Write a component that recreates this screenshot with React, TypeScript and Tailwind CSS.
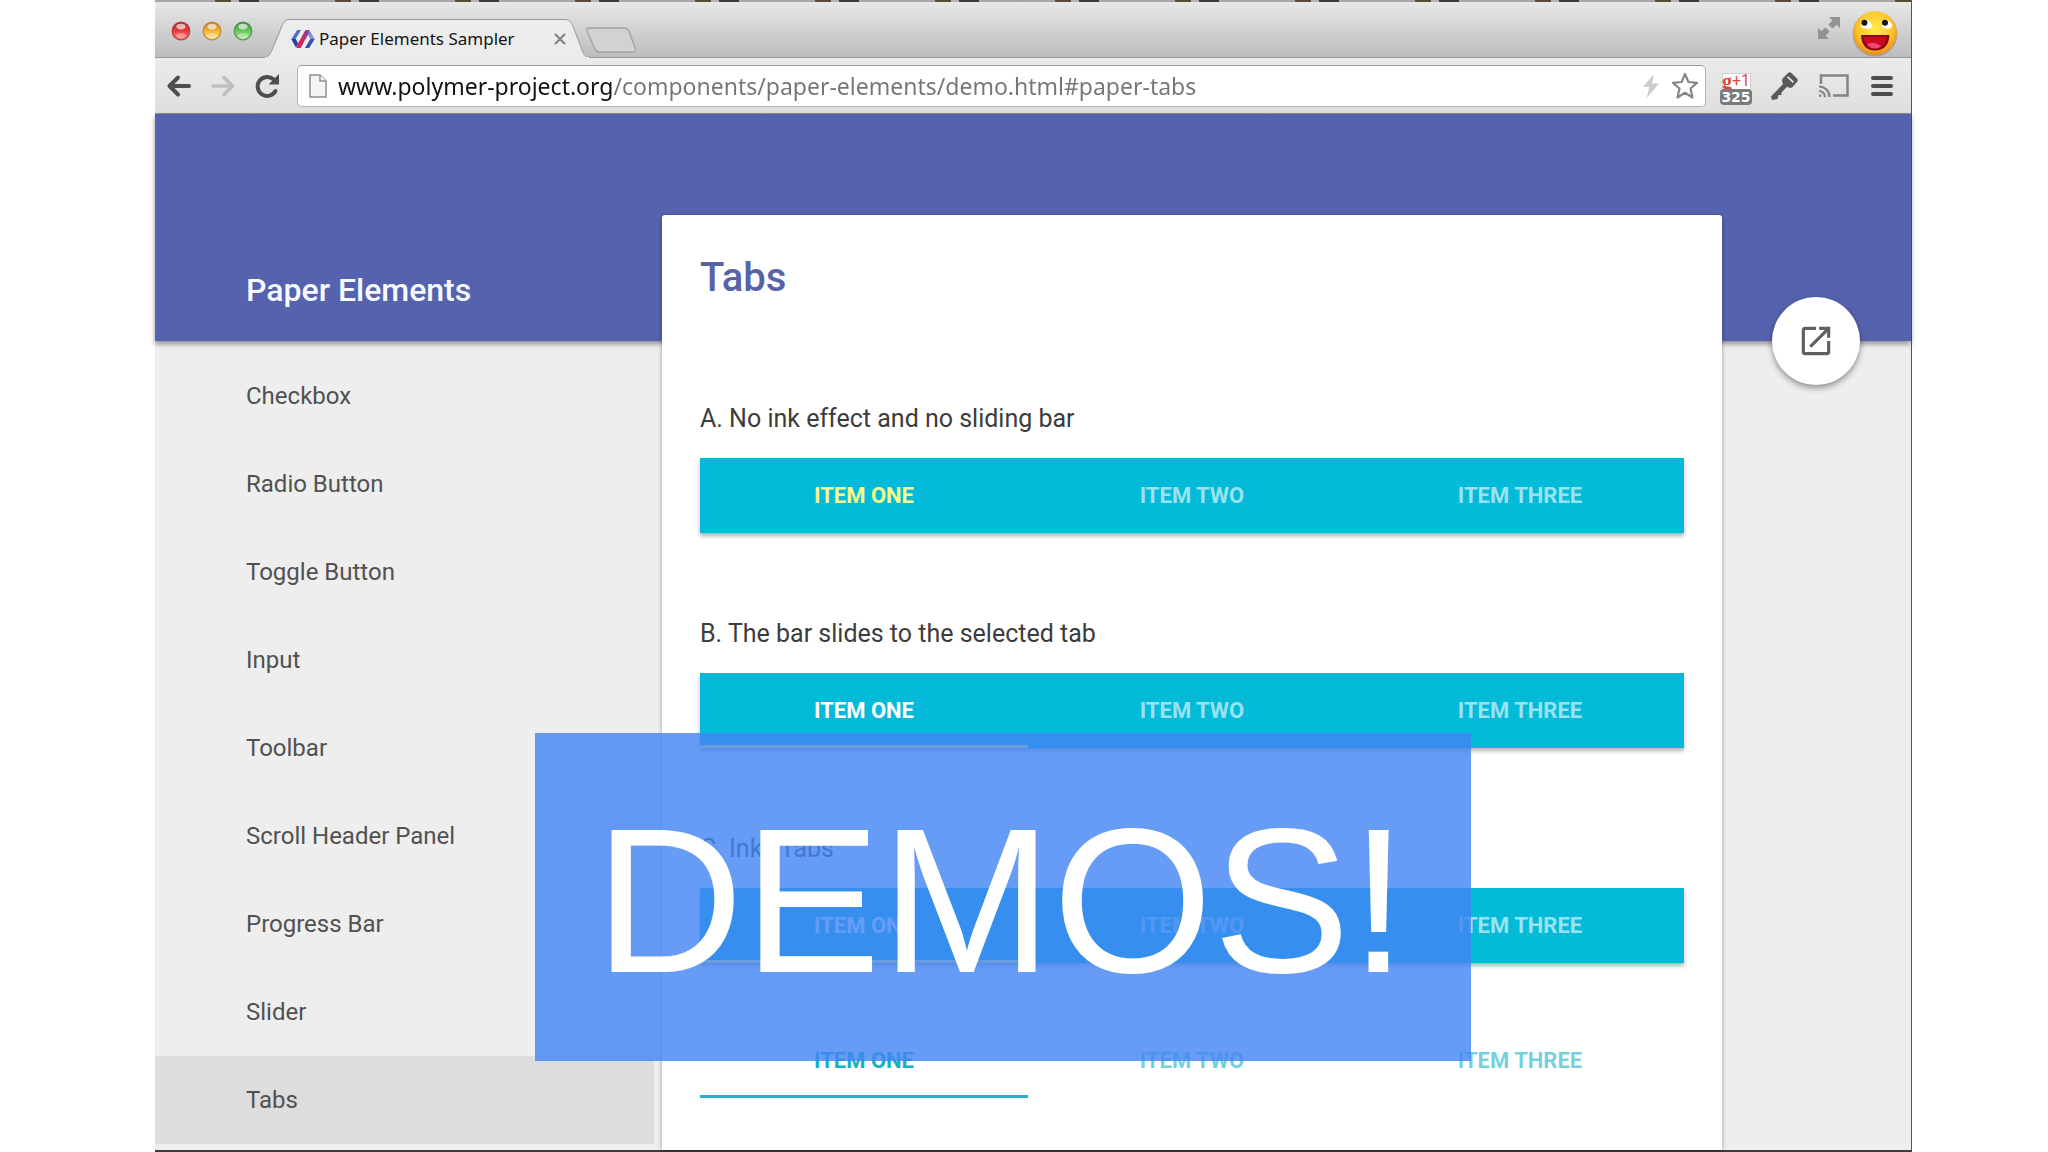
import React, { useState } from "react";

const NAV_ITEMS = [
  "Checkbox",
  "Radio Button",
  "Toggle Button",
  "Input",
  "Toolbar",
  "Scroll Header Panel",
  "Progress Bar",
  "Slider",
  "Tabs",
];

const TAB_ITEMS = ["ITEM ONE", "ITEM TWO", "ITEM THREE"];

type TabBarProps = {
  label: string;
  barClass: string;
  activeClass: string;
  idleClass: string;
  underlineClass?: string;
};

function TabBar({ label, barClass, activeClass, idleClass, underlineClass }: TabBarProps) {
  const [selected, setSelected] = useState(0);
  return (
    <div role="tablist" aria-label={label} className={`grid h-[75px] grid-cols-3 ${barClass}`}>
      {TAB_ITEMS.map((item, i) => (
        <button
          key={item}
          type="button"
          role="tab"
          aria-selected={i === selected}
          onClick={() => setSelected(i)}
          className={`relative text-[22px] font-bold ${i === selected ? activeClass : idleClass}`}
        >
          {item}
          {underlineClass && i === selected && (
            <span className={`absolute inset-x-0 bottom-0 h-[3px] ${underlineClass}`} />
          )}
        </button>
      ))}
    </div>
  );
}

function TrafficLight({ id, dark, mid, light, label }: { id: string; dark: string; mid: string; light: string; label: string }) {
  return (
    <button type="button" aria-label={label} className="size-5">
      <svg viewBox="0 0 20 20" className="size-5">
        <defs>
          <linearGradient id={id} x1="0" y1="0" x2="0" y2="1">
            <stop offset="0" stopColor={dark} />
            <stop offset="0.5" stopColor={mid} />
            <stop offset="1" stopColor={light} />
          </linearGradient>
        </defs>
        <circle cx="10" cy="10" r="8.8" fill={`url(#${id})`} stroke={dark} strokeOpacity="0.8" strokeWidth="1.2" />
        <ellipse cx="10" cy="5.6" rx="4.6" ry="2.8" fill="#fff" fillOpacity="0.65" />
        <ellipse cx="10" cy="14.6" rx="5" ry="2.6" fill="#fff" fillOpacity="0.3" />
      </svg>
    </button>
  );
}

function PolymerLogo() {
  return (
    <svg viewBox="0 0 24 20" className="h-5 w-6 shrink-0">
      <path d="M6.2 1 L10 1 L4.6 10 L7 14.4 L5 18.4 L0.4 10 Z" fill="#4d6fd0" />
      <path d="M0.4 10 L4.6 10 L7 14.4 L5 18.4 Z" fill="#2b3f9e" />
      <path d="M14.6 1 L18.4 1 L23.6 10 L18 19 L14 19 L19.4 10 L17 5.4 Z" fill="#7d90dc" />
      <path d="M19.4 10 L23.6 10 L18 19 L14 19 Z" fill="#3a4fae" />
      <path d="M14.6 1 L18 1 L17 5.4 L9.6 19 L5.4 19 L7 14.6 Z" fill="#d6245c" />
      <path d="M14.6 1 L18 1 L17 5.4 L14 10.8 L10.8 8 Z" fill="#9a3b93" />
    </svg>
  );
}

function SmileyIcon() {
  return (
    <svg viewBox="0 0 48 48" className="size-12">
      <defs>
        <radialGradient id="face" cx="0.5" cy="0.4" r="0.6">
          <stop offset="0" stopColor="#ffe94a" />
          <stop offset="0.65" stopColor="#fdc82c" />
          <stop offset="1" stopColor="#ee8a14" />
        </radialGradient>
      </defs>
      <circle cx="24" cy="25" r="22.6" fill="#000" fillOpacity="0.15" />
      <circle cx="24" cy="24" r="21.8" fill="url(#face)" />
      <path d="M10 18 C9 12 14 9 18 12 C21 14 22 17 20.6 19 C17 20 13 20 10 18Z" fill="#fff" />
      <path d="M31 18 C30 12 34 9 38 12 C41 14 42 17 40 19 C37 20 33 20 31 18Z" fill="#fff" />
      <circle cx="13.4" cy="13.8" r="3" fill="#16110a" />
      <circle cx="34" cy="13.8" r="3" fill="#16110a" />
      <path d="M10 26 L38.500 26 C38 36 33 41.500 24 41.500 C15 41.500 10.500 36 10 26Z" fill="#8e0612" />
      <path d="M12.500 28 L36 28 C35 34 31 39.500 24 39.500 C17 39.500 13 34 12.500 28Z" fill="#c90a22" />
      <path d="M16 36 C20 32 26 34 30 37.500 C26 40 20 40.500 16 36Z" fill="#f0476a" />
    </svg>
  );
}

function TitleBar() {
  return (
    <div className="flex h-14 border-b border-[#989898] bg-gradient-to-b from-[#e8e8e8] to-[#bdbcbe]">
      <div className="flex items-center gap-[11px] pt-0.5 pr-3.5 pl-4">
        <TrafficLight id="light-close" label="Close window" dark="#b3262a" mid="#ee3a3c" light="#ff8f88" />
        <TrafficLight id="light-min" label="Minimize window" dark="#b87a22" mid="#f5b536" light="#ffe487" />
        <TrafficLight id="light-zoom" label="Zoom window" dark="#3d8a3c" mid="#66c75e" light="#b4f09c" />
      </div>
      <div className="relative mt-[17px] -mb-px -ml-1 flex w-[328px] items-center pl-7">
        <svg viewBox="0 0 328 39" preserveAspectRatio="none" className="absolute inset-0 size-full">
          <path
            d="M0 38.500 C6 38.500 7 35 9 31 L19 7 C21 3 22 0.500 27 0.500 L302 0.500 C307 0.500 308 3 310 7 L319 31 C321 36 322 38.500 328 38.500"
            fill="#ececec"
            stroke="#989898"
          />
          <path d="M2 39 L326 39" stroke="#ececec" strokeWidth="2" />
        </svg>
        <button type="button" className="relative flex items-center gap-1 font-['Noto_Sans',sans-serif] text-[17px] whitespace-nowrap text-[#141414]">
          <PolymerLogo />
          Paper Elements Sampler
        </button>
        <button type="button" aria-label="Close tab" className="relative ml-[37px] size-4">
          <svg viewBox="0 0 16 16" className="size-4">
            <path d="M3 3 L13 13 M13 3 L3 13" stroke="#868686" strokeWidth="2.200" />
          </svg>
        </button>
      </div>
      <button type="button" aria-label="New tab" className="-ml-1.5 mt-[25px] h-[26px] w-[52px]">
        <svg viewBox="0 0 52 26" className="h-[26px] w-[52px]">
          <path
            d="M4 1 L39 1 C42 1 43 2 44 4 L50 21 C51 24 50 25 47 25 L16 25 C12 25 11 24 9.500 21 L2 4 C1 2 2 1 4 1Z"
            fill="#d2d2d2"
            stroke="#a3a3a3"
            strokeWidth="1.300"
          />
        </svg>
      </button>
      <div className="ml-auto flex items-center gap-2.5 pr-3">
        <button type="button" aria-label="Enter full screen" className="mb-1 size-6">
          <svg viewBox="0 0 24 24" className="size-6" fill="#929292">
            <path d="M12 1 L23 1 L23 12 L19.500 8.700 L15.600 12.600 L11.400 8.500 L15.400 4.500Z" />
            <path d="M1 12 L4.500 15.300 L8.400 11.400 L12.600 15.500 L8.600 19.500 L12 23 L1 23Z" />
          </svg>
        </button>
        <button type="button" aria-label="Profile" className="mt-1.5 size-12">
          <SmileyIcon />
        </button>
      </div>
    </div>
  );
}

function AddressBar() {
  const [url, setUrl] = useState("www.polymer-project.org/components/paper-elements/demo.html#paper-tabs");
  return (
    <div className="flex h-[42px] min-w-0 flex-1 items-center rounded-[5px] border border-[#b4b3b4] border-t-[#9c9c9c] bg-white pr-1.5 pl-[11px]">
      <svg viewBox="0 0 18 24" className="h-6 w-[18px] shrink-0">
        <path d="M1 1 L11 1 L17 7 L17 23 L1 23Z" fill="#f5f5f5" stroke="#8f8f8f" strokeWidth="1.500" />
        <path d="M11 1 L11 7 L17 7" fill="#fff" stroke="#8f8f8f" strokeWidth="1.500" />
      </svg>
      <input
        type="text"
        aria-label="Address"
        spellCheck={false}
        value={url}
        onChange={(e) => setUrl(e.target.value)}
        className="ml-[11px] h-10 min-w-0 flex-1 bg-[linear-gradient(to_right,#111_275px,#757575_275px)] bg-clip-text font-['Noto_Sans',sans-serif] text-[23px] text-transparent caret-black outline-none"
      />
      <svg viewBox="0 0 16 24" className="h-6 w-4 shrink-0">
        <path d="M11 0 L0 13 L6.500 13 L3.500 24 L16 9.500 L9 9.500Z" fill="#cbcbcb" />
      </svg>
      <button type="button" aria-label="Bookmark this page" className="ml-3 size-7">
        <svg viewBox="0 0 28 28" className="size-7">
          <path
            d="M14 2 L17.400 10 L26 10.800 L19.500 16.500 L21.500 25.500 L14 20.800 L6.500 25.500 L8.500 16.500 L2 10.800 L10.600 10Z"
            fill="#fff"
            stroke="#868686"
            strokeWidth="2.200"
            strokeLinejoin="round"
          />
        </svg>
      </button>
    </div>
  );
}

function Toolbar() {
  return (
    <div className="flex h-14 items-center border-b border-[#8e8e94] bg-gradient-to-b from-[#ececec] to-[#dfdddd] pr-[18px] pl-[11px]">
      <button type="button" aria-label="Back" className="size-[26px]">
        <svg viewBox="0 0 26 26" className="size-[26px]">
          <path d="M23 13 L4 13 M12 4.500 L3.500 13 L12 21.500" fill="none" stroke="#4e4e4e" strokeWidth="4" strokeLinecap="round" strokeLinejoin="round" />
        </svg>
      </button>
      <button type="button" aria-label="Forward" className="ml-[18px] size-[26px]">
        <svg viewBox="0 0 26 26" className="size-[26px]">
          <path d="M3 13 L22 13 M14 4.500 L22.500 13 L14 21.500" fill="none" stroke="#bebebe" strokeWidth="3.500" strokeLinecap="round" strokeLinejoin="round" />
        </svg>
      </button>
      <button type="button" aria-label="Reload" className="ml-[18px] size-[26px]">
        <svg viewBox="0 0 26 26" className="size-[26px]">
          <path d="M21.500 18 A9.500 9.500 0 1 1 19.500 6.300" fill="none" stroke="#4e4e4e" strokeWidth="4" strokeLinecap="round" />
          <path d="M25 1 L25 11.500 L14.500 11.500Z" fill="#4e4e4e" />
        </svg>
      </button>
      <div className="ml-[17px] flex min-w-0 flex-1">
        <AddressBar />
      </div>
      <button type="button" aria-label="Plus one, 325" className="mt-1.5 ml-3.5 flex w-8 flex-col items-center">
        <span className="flex h-4 w-[29px] items-center justify-center border border-b-0 border-[#cfcfcf] bg-white text-[#dd4b39]">
          <span className="font-['Liberation_Serif',serif] text-xl leading-4 font-bold">g</span>
          <span className="font-['Roboto',sans-serif] text-base leading-4">+1</span>
        </span>
        <span className="flex h-4 w-8 items-center justify-center rounded-sm bg-[#7b7b7b] font-['DejaVu_Sans',sans-serif] text-sm leading-4 font-bold text-white">
          325
        </span>
      </button>
      <button type="button" aria-label="Password manager" className="ml-[18px] size-7">
        <svg viewBox="0 0 28 28" className="size-7">
          <path
            fillRule="evenodd"
            d="M13 6 L18 1 C19 0 20.500 0 21.500 1 L27 6.500 C28 7.500 28 9 27 10 L22.500 15 C21.500 16 20 16 18.500 15.500 L17 14.800 L11.500 20.500 L11.500 23 L8.500 23 L7.500 27 L2 28 L1 24.500 L13 12 C12 10 11.500 7.500 13 6Z M18.200 4.200 L17 5.400 L22.800 11 L24 9.800Z"
            fill="#595959"
          />
        </svg>
      </button>
      <button type="button" aria-label="Cast" className="ml-5 h-6 w-[31px]">
        <svg viewBox="0 0 31 24" className="h-6 w-[31px]" fill="none" stroke="#858585">
          <path d="M3 10 L3 1.500 L29.500 1.500 L29.500 21.500 L15 21.500" strokeWidth="2.500" />
          <path d="M1 12.500 A10.500 10.500 0 0 1 11.500 23 M1 17 A6 6 0 0 1 7 23" strokeWidth="2.200" />
          <circle cx="2.200" cy="21.800" r="1.300" fill="#858585" stroke="none" />
        </svg>
      </button>
      <button type="button" aria-label="Menu" className="ml-[22px] flex w-[22px] flex-col gap-1">
        <span className="h-1 rounded-sm bg-[#4c4c4c]" />
        <span className="h-1 rounded-sm bg-[#4c4c4c]" />
        <span className="h-1 rounded-sm bg-[#4c4c4c]" />
      </button>
    </div>
  );
}

function SectionTitle({ children }: { children: React.ReactNode }) {
  return <h3 className="mb-[23px] text-[25px] leading-8 text-[#3c3c3c]">{children}</h3>;
}

export default function App() {
  const filledBar = "bg-[#03bbd9] shadow-[0_3px_4px_rgba(0,0,0,0.3)]";
  return (
    <div className="relative flex min-h-screen flex-col bg-white pr-[136px] pl-[155px] font-['Roboto',sans-serif]">
      <div className="flex flex-1 flex-col border-r border-b-2 border-r-[#55555c] border-b-[#3c3c3e] bg-[#eeeeee]">
        <div className="h-0.5 bg-[repeating-linear-gradient(to_right,#a8a8a8_0_60px,#5a4a38_60px_76px,#b4b4b4_76px_84px,#3c3c3c_84px_104px,#a8a8a8_104px_120px)]" />
        <TitleBar />
        <Toolbar />
        <header className="relative flex h-[227px] items-end bg-[#5563af] pb-[31px] pl-[91px] shadow-[0_3px_5px_rgba(0,0,0,0.4)]">
          <h1 className="text-[32px] leading-10 font-medium text-[#f7f9ff]">Paper Elements</h1>
        </header>
        <div className="flex flex-1">
          <nav aria-label="Elements" className="w-[507px] shrink-0 pt-[11px] pr-2 pb-1.5">
            {NAV_ITEMS.map((item) => (
              <a
                key={item}
                href={`#paper-${item.toLowerCase().replace(/ /g, "-")}`}
                aria-current={item === "Tabs" ? "page" : undefined}
                className={`flex h-22 items-center pl-[91px] text-2xl text-[#515151] ${item === "Tabs" ? "bg-[#dddddd]" : ""}`}
              >
                {item}
              </a>
            ))}
          </nav>
          <main className="relative -mt-[126px] min-w-0 flex-1 rounded-t-[3px] bg-white px-[38px] pt-[39px] shadow-[0_1px_4px_rgba(0,0,0,0.35)]">
            <h2 className="text-[40px] leading-12 font-medium text-[#5664a6]">Tabs</h2>
            <section className="mt-[101px]">
              <SectionTitle>A. No ink effect and no sliding bar</SectionTitle>
              <TabBar label="No ink, no bar" barClass={filledBar} activeClass="text-[#f4ff8a]" idleClass="text-white/60" />
            </section>
            <section className="mt-[85px]">
              <SectionTitle>B. The bar slides to the selected tab</SectionTitle>
              <TabBar label="Sliding bar" barClass={filledBar} activeClass="text-white" idleClass="text-white/60" underlineClass="bg-[#ffff8d]" />
            </section>
            <section className="mt-[85px]">
              <SectionTitle>C. Inky Tabs</SectionTitle>
              <TabBar label="Inky tabs" barClass={filledBar} activeClass="text-white" idleClass="text-white/60" underlineClass="bg-[#ffff8d]" />
            </section>
            <section className="mt-[60px]">
              <TabBar label="Light tabs" barClass="" activeClass="text-[#14b2c4]" idleClass="text-[#14b2c4]/60" underlineClass="bg-[#24b4c4]" />
            </section>
          </main>
          <div className="w-[189px] shrink-0">
            <button
              type="button"
              aria-label="Open in new window"
              className="relative -mt-11 ml-[50px] flex size-22 items-center justify-center rounded-full bg-white shadow-[0_3px_6px_rgba(0,0,0,0.4)]"
            >
              <svg viewBox="0 0 24 24" className="size-[38px]" fill="#606060">
                <path d="M19 19H5V5h7V3H5c-1.110 0-2 .9-2 2v14c0 1.100.89 2 2 2h14c1.100 0 2-.9 2-2v-7h-2v7zM14 3v2h3.590l-9.830 9.830 1.410 1.410L19 6.410V10h2V3h-7z" />
              </svg>
            </button>
          </div>
        </div>
      </div>
      <div className="absolute top-[733px] left-[535px] flex h-[328px] w-[936px] items-center justify-center bg-[#4285f4]/81 pt-2 pr-1 font-['Liberation_Sans',sans-serif] text-[206px] leading-none text-white">
        DEMOS!
      </div>
    </div>
  );
}
